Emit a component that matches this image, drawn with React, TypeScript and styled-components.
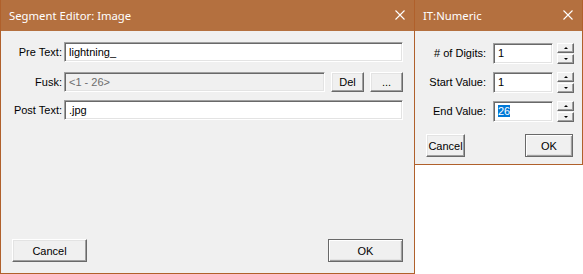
import React from "react";
import styled, { createGlobalStyle, css } from "styled-components";

const Global = createGlobalStyle`
  html, body { margin: 0; padding: 0; background: #ffffff; }
  body { font-family: "Liberation Sans", Arial, sans-serif; font-size: 11px; color: #000; }
  * { box-sizing: border-box; }
`;

const Desktop = styled.div`
  position: relative;
  width: 583px;
  height: 274px;
  overflow: hidden;
`;

const Window = styled.div<{ $w: number; $h: number; $floating?: boolean }>`
  width: ${(p) => p.$w}px;
  height: ${(p) => p.$h}px;
  border: 1px solid #b0602b;
  border-top: none;
  background: #f0f0f0;
  display: flex;
  flex-direction: column;
  ${(p) =>
    p.$floating &&
    css`
      position: absolute;
      left: 414px;
      top: 0;
    `}
`;

const TitleBar = styled.div`
  height: 31px;
  flex: none;
  background: #b4703f;
  display: flex;
  align-items: center;
  justify-content: space-between;
  padding: 0 9px 1px 8px;
  margin: 0 -1px;
  border-left: 1px solid #b0602b;
  border-right: 1px solid #b0602b;
`;

const Title = styled.span`
  color: #ffffff;
  font-family: "Noto Sans", "Open Sans", sans-serif;
  font-size: 11.3px;
`;

const CloseIcon = () => (
  <svg width="10" height="10" viewBox="0 0 10 10">
    <path d="M0.5 0.5 L9.5 9.5 M9.5 0.5 L0.5 9.5" stroke="#ffffff" strokeWidth="1.1" />
  </svg>
);

const Body = styled.div<{ $pt: number }>`
  flex: 1;
  display: flex;
  flex-direction: column;
  padding-top: ${(p) => p.$pt}px;
`;

const Row = styled.div<{ $mt?: number; $labelW: number; $gap: number }>`
  display: grid;
  grid-template-columns: ${(p) => p.$labelW}px auto auto auto;
  column-gap: ${(p) => p.$gap}px;
  align-items: center;
  justify-content: start;
  margin-top: ${(p) => p.$mt ?? 0}px;
`;

const Label = styled.label`
  text-align: right;
  white-space: nowrap;
`;

const TextBox = styled.div<{ $w: number; $h: number; $disabled?: boolean }>`
  width: ${(p) => p.$w}px;
  height: ${(p) => p.$h}px;
  border: 1px solid;
  border-color: #a0a0a0 #ffffff #ffffff #a0a0a0;
  box-shadow: inset 1px 1px 0 #696969, inset -1px -1px 0 #e3e3e3;
  background: ${(p) => (p.$disabled ? "#f0f0f0" : "#ffffff")};
  color: ${(p) => (p.$disabled ? "#6d6d6d" : "#000000")};
  padding: 2px 0 0 4px;
  line-height: 14px;
  white-space: nowrap;
`;

const Selected = styled.span`
  background: #0078d7;
  color: #ffffff;
`;

const Button = styled.button<{ $w: number; $h: number; $default?: boolean; $ml?: number }>`
  width: ${(p) => p.$w}px;
  height: ${(p) => p.$h}px;
  margin: 0 0 0 ${(p) => p.$ml ?? 0}px;
  padding: 0;
  font-family: "Liberation Sans", Arial, sans-serif;
  font-size: 11px;
  color: #000;
  background: #f0f0f0;
  border: 1px solid;
  border-color: #ffffff #696969 #696969 #ffffff;
  box-shadow: inset -1px -1px 0 #a0a0a0, inset 1px 1px 0 #e3e3e3;
  ${(p) =>
    p.$default &&
    css`
      border-color: #696969;
      box-shadow: inset 1px 1px 0 #ffffff, inset -1px -1px 0 #a0a0a0, inset -2px -2px 0 #e3e3e3;
    `}
`;

const Footer = styled.div<{ $pl: number; $pr: number; $pb?: number; $mt?: number }>`
  display: flex;
  justify-content: space-between;
  align-items: flex-end;
  padding: 0 ${(p) => p.$pr}px ${(p) => p.$pb ?? 0}px ${(p) => p.$pl}px;
  margin-top: ${(p) => (p.$mt === undefined ? "auto" : `${p.$mt}px`)};
`;

const Spin = styled.div`
  display: flex;
  flex-direction: column;
  gap: 1px;
  margin-left: -3px;
  padding-top: 1px;
`;

const SpinBtn = styled.div<{ $dir: "up" | "down" }>`
  width: 17px;
  height: 10px;
  background: #f0f0f0;
  border: 1px solid;
  border-color: #ffffff #696969 #696969 #ffffff;
  box-shadow: inset -1px -1px 0 #a0a0a0;
  display: flex;
  align-items: center;
  justify-content: center;
  &::after {
    content: "";
    width: 0;
    height: 0;
    border-left: 2px solid transparent;
    border-right: 2px solid transparent;
    ${(p) =>
      p.$dir === "up"
        ? css`
            border-bottom: 2px solid #000;
          `
        : css`
            border-top: 2px solid #000;
          `}
  }
`;

const Spinner = () => (
  <Spin>
    <SpinBtn $dir="up" />
    <SpinBtn $dir="down" />
  </Spin>
);

export default function App() {
  return (
    <>
      <Global />
      <Desktop>
        <Window $w={415} $h={274}>
          <TitleBar>
            <Title>Segment Editor: Image</Title>
            <CloseIcon />
          </TitleBar>
          <Body $pt={11}>
            <Row $labelW={61} $gap={2}>
              <Label>Pre Text:</Label>
              <TextBox $w={339} $h={20}>lightning_</TextBox>
            </Row>
            <Row $labelW={61} $gap={2} $mt={10}>
              <Label>Fusk:</Label>
              <TextBox $w={261} $h={20} $disabled>
                &lt;1 - 26&gt;
              </TextBox>
              <Button $w={33} $h={20} $ml={4}>
                Del
              </Button>
              <Button $w={33} $h={20} $ml={4}>
                ...
              </Button>
            </Row>
            <Row $labelW={61} $gap={2} $mt={8}>
              <Label>Post Text:</Label>
              <TextBox $w={339} $h={20}>.jpg</TextBox>
            </Row>
            <Footer $pl={11} $pr={11} $pb={11}>
              <Button $w={75} $h={23}>Cancel</Button>
              <Button $w={75} $h={23} $default>
                OK
              </Button>
            </Footer>
          </Body>
        </Window>

        <Window $w={169} $h={165} $floating>
          <TitleBar>
            <Title>IT:Numeric</Title>
            <CloseIcon />
          </TitleBar>
          <Body $pt={11}>
            <Row $labelW={71} $gap={7}>
              <Label># of Digits:</Label>
              <TextBox $w={60} $h={21}>1</TextBox>
              <Spinner />
            </Row>
            <Row $labelW={71} $gap={7} $mt={7}>
              <Label>Start Value:</Label>
              <TextBox $w={60} $h={21}>1</TextBox>
              <Spinner />
            </Row>
            <Row $labelW={71} $gap={7} $mt={7}>
              <Label>End Value:</Label>
              <TextBox $w={60} $h={21}>
                <Selected>26</Selected>
              </TextBox>
              <Spinner />
            </Row>
            <Footer $pl={11} $pr={9} $mt={12}>
              <Button $w={39} $h={23}>Cancel</Button>
              <Button $w={48} $h={23} $default>
                OK
              </Button>
            </Footer>
          </Body>
        </Window>
      </Desktop>
    </>
  );
}
